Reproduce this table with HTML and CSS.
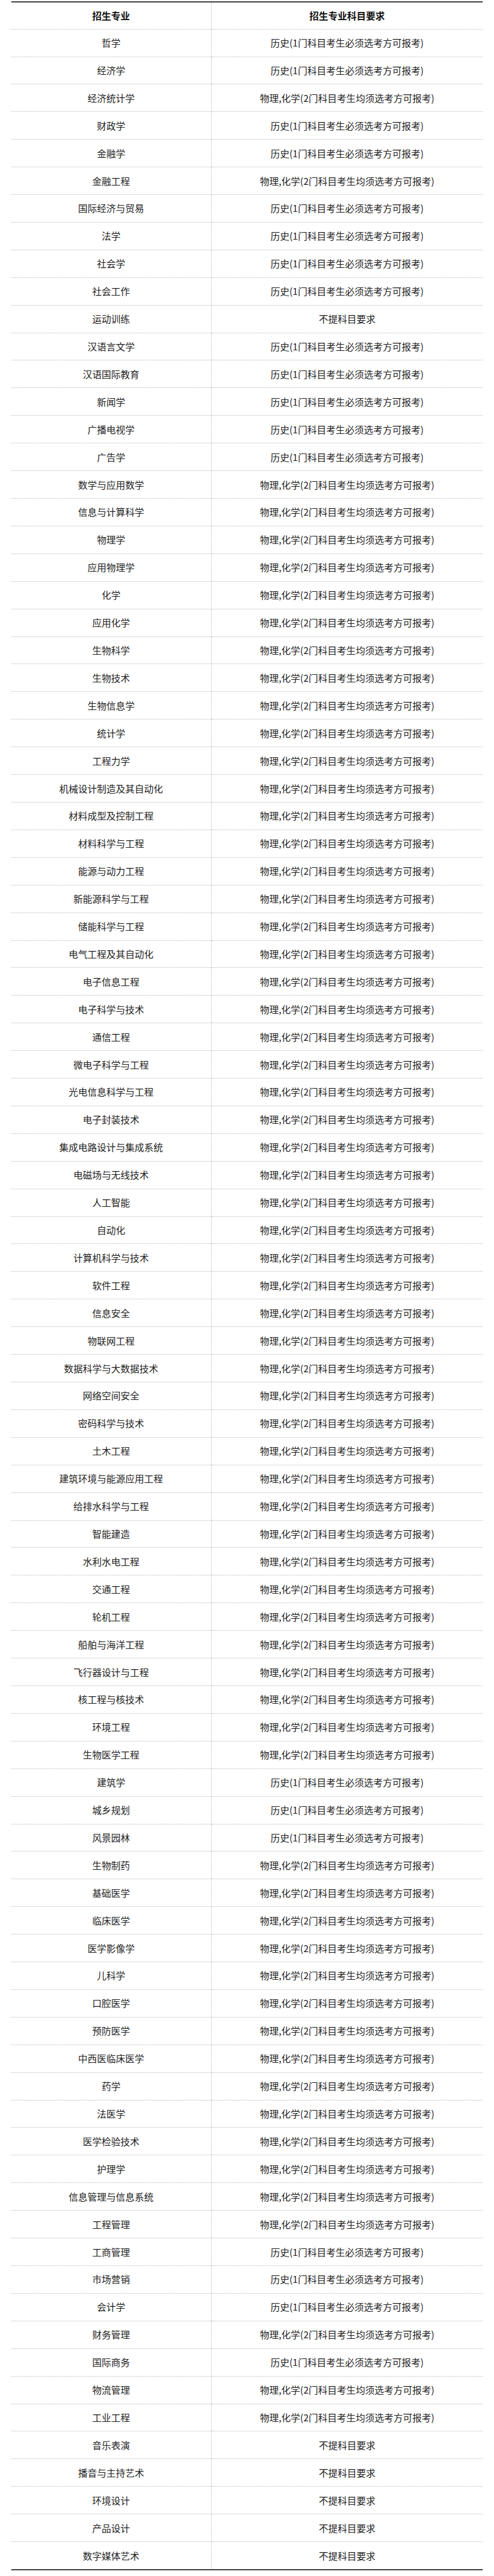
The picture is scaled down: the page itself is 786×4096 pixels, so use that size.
FILE: index.html
```html
<!DOCTYPE html>
<html lang="zh-CN">
<head>
<meta charset="utf-8">
<title>招生专业科目要求</title>
<link rel="stylesheet" href="styles.css">
</head>
<body>
<table class="req">
<colgroup><col class="c1"><col class="c2"></colgroup>
<thead>
<tr><th>招生专业</th><th>招生专业科目要求</th></tr>
</thead>
<tbody>
<tr><td>哲学</td><td>历史(1门科目考生必须选考方可报考)</td></tr>
<tr><td>经济学</td><td>历史(1门科目考生必须选考方可报考)</td></tr>
<tr><td>经济统计学</td><td>物理,化学(2门科目考生均须选考方可报考)</td></tr>
<tr><td>财政学</td><td>历史(1门科目考生必须选考方可报考)</td></tr>
<tr><td>金融学</td><td>历史(1门科目考生必须选考方可报考)</td></tr>
<tr><td>金融工程</td><td>物理,化学(2门科目考生均须选考方可报考)</td></tr>
<tr><td>国际经济与贸易</td><td>历史(1门科目考生必须选考方可报考)</td></tr>
<tr><td>法学</td><td>历史(1门科目考生必须选考方可报考)</td></tr>
<tr><td>社会学</td><td>历史(1门科目考生必须选考方可报考)</td></tr>
<tr><td>社会工作</td><td>历史(1门科目考生必须选考方可报考)</td></tr>
<tr><td>运动训练</td><td>不提科目要求</td></tr>
<tr><td>汉语言文学</td><td>历史(1门科目考生必须选考方可报考)</td></tr>
<tr><td>汉语国际教育</td><td>历史(1门科目考生必须选考方可报考)</td></tr>
<tr><td>新闻学</td><td>历史(1门科目考生必须选考方可报考)</td></tr>
<tr><td>广播电视学</td><td>历史(1门科目考生必须选考方可报考)</td></tr>
<tr><td>广告学</td><td>历史(1门科目考生必须选考方可报考)</td></tr>
<tr><td>数学与应用数学</td><td>物理,化学(2门科目考生均须选考方可报考)</td></tr>
<tr><td>信息与计算科学</td><td>物理,化学(2门科目考生均须选考方可报考)</td></tr>
<tr><td>物理学</td><td>物理,化学(2门科目考生均须选考方可报考)</td></tr>
<tr><td>应用物理学</td><td>物理,化学(2门科目考生均须选考方可报考)</td></tr>
<tr><td>化学</td><td>物理,化学(2门科目考生均须选考方可报考)</td></tr>
<tr><td>应用化学</td><td>物理,化学(2门科目考生均须选考方可报考)</td></tr>
<tr><td>生物科学</td><td>物理,化学(2门科目考生均须选考方可报考)</td></tr>
<tr><td>生物技术</td><td>物理,化学(2门科目考生均须选考方可报考)</td></tr>
<tr><td>生物信息学</td><td>物理,化学(2门科目考生均须选考方可报考)</td></tr>
<tr><td>统计学</td><td>物理,化学(2门科目考生均须选考方可报考)</td></tr>
<tr><td>工程力学</td><td>物理,化学(2门科目考生均须选考方可报考)</td></tr>
<tr><td>机械设计制造及其自动化</td><td>物理,化学(2门科目考生均须选考方可报考)</td></tr>
<tr><td>材料成型及控制工程</td><td>物理,化学(2门科目考生均须选考方可报考)</td></tr>
<tr><td>材料科学与工程</td><td>物理,化学(2门科目考生均须选考方可报考)</td></tr>
<tr><td>能源与动力工程</td><td>物理,化学(2门科目考生均须选考方可报考)</td></tr>
<tr><td>新能源科学与工程</td><td>物理,化学(2门科目考生均须选考方可报考)</td></tr>
<tr><td>储能科学与工程</td><td>物理,化学(2门科目考生均须选考方可报考)</td></tr>
<tr><td>电气工程及其自动化</td><td>物理,化学(2门科目考生均须选考方可报考)</td></tr>
<tr><td>电子信息工程</td><td>物理,化学(2门科目考生均须选考方可报考)</td></tr>
<tr><td>电子科学与技术</td><td>物理,化学(2门科目考生均须选考方可报考)</td></tr>
<tr><td>通信工程</td><td>物理,化学(2门科目考生均须选考方可报考)</td></tr>
<tr><td>微电子科学与工程</td><td>物理,化学(2门科目考生均须选考方可报考)</td></tr>
<tr><td>光电信息科学与工程</td><td>物理,化学(2门科目考生均须选考方可报考)</td></tr>
<tr><td>电子封装技术</td><td>物理,化学(2门科目考生均须选考方可报考)</td></tr>
<tr><td>集成电路设计与集成系统</td><td>物理,化学(2门科目考生均须选考方可报考)</td></tr>
<tr><td>电磁场与无线技术</td><td>物理,化学(2门科目考生均须选考方可报考)</td></tr>
<tr><td>人工智能</td><td>物理,化学(2门科目考生均须选考方可报考)</td></tr>
<tr><td>自动化</td><td>物理,化学(2门科目考生均须选考方可报考)</td></tr>
<tr><td>计算机科学与技术</td><td>物理,化学(2门科目考生均须选考方可报考)</td></tr>
<tr><td>软件工程</td><td>物理,化学(2门科目考生均须选考方可报考)</td></tr>
<tr><td>信息安全</td><td>物理,化学(2门科目考生均须选考方可报考)</td></tr>
<tr><td>物联网工程</td><td>物理,化学(2门科目考生均须选考方可报考)</td></tr>
<tr><td>数据科学与大数据技术</td><td>物理,化学(2门科目考生均须选考方可报考)</td></tr>
<tr><td>网络空间安全</td><td>物理,化学(2门科目考生均须选考方可报考)</td></tr>
<tr><td>密码科学与技术</td><td>物理,化学(2门科目考生均须选考方可报考)</td></tr>
<tr><td>土木工程</td><td>物理,化学(2门科目考生均须选考方可报考)</td></tr>
<tr><td>建筑环境与能源应用工程</td><td>物理,化学(2门科目考生均须选考方可报考)</td></tr>
<tr><td>给排水科学与工程</td><td>物理,化学(2门科目考生均须选考方可报考)</td></tr>
<tr><td>智能建造</td><td>物理,化学(2门科目考生均须选考方可报考)</td></tr>
<tr><td>水利水电工程</td><td>物理,化学(2门科目考生均须选考方可报考)</td></tr>
<tr><td>交通工程</td><td>物理,化学(2门科目考生均须选考方可报考)</td></tr>
<tr><td>轮机工程</td><td>物理,化学(2门科目考生均须选考方可报考)</td></tr>
<tr><td>船舶与海洋工程</td><td>物理,化学(2门科目考生均须选考方可报考)</td></tr>
<tr><td>飞行器设计与工程</td><td>物理,化学(2门科目考生均须选考方可报考)</td></tr>
<tr><td>核工程与核技术</td><td>物理,化学(2门科目考生均须选考方可报考)</td></tr>
<tr><td>环境工程</td><td>物理,化学(2门科目考生均须选考方可报考)</td></tr>
<tr><td>生物医学工程</td><td>物理,化学(2门科目考生均须选考方可报考)</td></tr>
<tr><td>建筑学</td><td>历史(1门科目考生必须选考方可报考)</td></tr>
<tr><td>城乡规划</td><td>历史(1门科目考生必须选考方可报考)</td></tr>
<tr><td>风景园林</td><td>历史(1门科目考生必须选考方可报考)</td></tr>
<tr><td>生物制药</td><td>物理,化学(2门科目考生均须选考方可报考)</td></tr>
<tr><td>基础医学</td><td>物理,化学(2门科目考生均须选考方可报考)</td></tr>
<tr><td>临床医学</td><td>物理,化学(2门科目考生均须选考方可报考)</td></tr>
<tr><td>医学影像学</td><td>物理,化学(2门科目考生均须选考方可报考)</td></tr>
<tr><td>儿科学</td><td>物理,化学(2门科目考生均须选考方可报考)</td></tr>
<tr><td>口腔医学</td><td>物理,化学(2门科目考生均须选考方可报考)</td></tr>
<tr><td>预防医学</td><td>物理,化学(2门科目考生均须选考方可报考)</td></tr>
<tr><td>中西医临床医学</td><td>物理,化学(2门科目考生均须选考方可报考)</td></tr>
<tr><td>药学</td><td>物理,化学(2门科目考生均须选考方可报考)</td></tr>
<tr><td>法医学</td><td>物理,化学(2门科目考生均须选考方可报考)</td></tr>
<tr><td>医学检验技术</td><td>物理,化学(2门科目考生均须选考方可报考)</td></tr>
<tr><td>护理学</td><td>物理,化学(2门科目考生均须选考方可报考)</td></tr>
<tr><td>信息管理与信息系统</td><td>物理,化学(2门科目考生均须选考方可报考)</td></tr>
<tr><td>工程管理</td><td>物理,化学(2门科目考生均须选考方可报考)</td></tr>
<tr><td>工商管理</td><td>历史(1门科目考生必须选考方可报考)</td></tr>
<tr><td>市场营销</td><td>历史(1门科目考生必须选考方可报考)</td></tr>
<tr><td>会计学</td><td>历史(1门科目考生必须选考方可报考)</td></tr>
<tr><td>财务管理</td><td>物理,化学(2门科目考生均须选考方可报考)</td></tr>
<tr><td>国际商务</td><td>历史(1门科目考生必须选考方可报考)</td></tr>
<tr><td>物流管理</td><td>物理,化学(2门科目考生均须选考方可报考)</td></tr>
<tr><td>工业工程</td><td>物理,化学(2门科目考生均须选考方可报考)</td></tr>
<tr><td>音乐表演</td><td>不提科目要求</td></tr>
<tr><td>播音与主持艺术</td><td>不提科目要求</td></tr>
<tr><td>环境设计</td><td>不提科目要求</td></tr>
<tr><td>产品设计</td><td>不提科目要求</td></tr>
<tr><td>数字媒体艺术</td><td>不提科目要求</td></tr>
</tbody>
</table>
</body>
</html>
```

FILE: styles.css
```css
html, body {
  margin: 0;
  padding: 0;
  background: #fff;
}

body {
  font-family: "Noto Sans CJK SC", "Noto Sans", sans-serif;
  color: #222;
}

.req {
  margin: 2px 0 0 18px;
  width: 750px;
  border-collapse: collapse;
  table-layout: fixed;
  border-top: 2px solid #444;
  border-bottom: 2px solid #444;
  font-size: 15px;
}

.req .c1 { width: 318px; }
.req .c2 { width: 432px; }

.req th,
.req td {
  padding: 0;
  text-align: center;
  vertical-align: middle;
  height: 42.92px;
  line-height: 20px;
  border-bottom: 1px dotted #bbb;
}

.req th {
  height: 41.6px;
  font-weight: bold;
  color: #111;
}

.req th + th,
.req td + td {
  border-left: 1px dotted #bbb;
}

.req tbody tr:last-child td {
  border-bottom: 2px solid #444;
}
```
